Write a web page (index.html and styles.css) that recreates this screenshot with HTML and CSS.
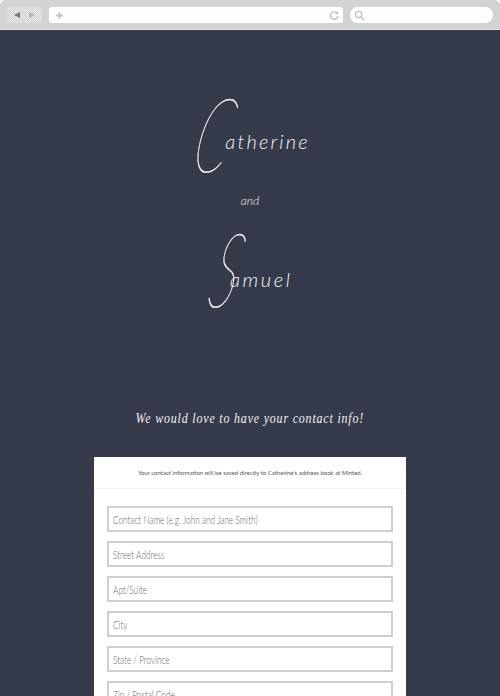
FILE: index.html
```html
<!DOCTYPE html>
<html lang="en">
<head>
<meta charset="utf-8">
<title>Contact info</title>
<link rel="stylesheet" href="styles.css">
</head>
<body>
<div class="window">
  <header class="toolbar">
    <div class="nav">
      <svg class="nav-icon" viewBox="0 0 10 10"><path d="M8 2 2 5l6 3z" fill="#777"/></svg>
      <svg class="nav-icon" viewBox="0 0 10 10"><path d="M2 2l6 3-6 3z" fill="#b4b4b4"/></svg>
    </div>
    <div class="address">
      <svg class="plus" viewBox="0 0 10 10"><path d="M5 1v8M1 5h8" stroke="#c4c4c4" stroke-width="2"/></svg>
      <svg class="reload" viewBox="0 0 10 10"><path d="M8 3.2A3.7 3.7 0 1 0 8.8 6" fill="none" stroke="#bdbdbd" stroke-width="1.4"/><path d="M6.2 3.6 9 4V1z" fill="#bdbdbd"/></svg>
    </div>
    <div class="search">
      <svg class="glass" viewBox="0 0 12 12"><circle cx="5" cy="5" r="3.4" fill="none" stroke="#c0c0c0" stroke-width="1.4"/><path d="M7.6 7.6 11 11" stroke="#c0c0c0" stroke-width="1.6"/></svg>
    </div>
  </header>
  <main class="page">
    <section class="names">
      <h1 class="script-name catherine"><span class="cap">C</span><span class="rest">atherine</span></h1>
      <p class="and">and</p>
      <h1 class="script-name samuel"><span class="cap">S</span><span class="rest">amuel</span></h1>
    </section>
    <h2 class="tagline">We would love to have your contact info!</h2>
    <section class="card">
      <p class="notice">Your contact information will be saved directly to Catherine's address book at Minted.</p>
      <form class="fields">
        <div class="field"><span class="hint">Contact Name (e.g. John and Jane Smith)</span></div>
        <div class="field"><span class="hint">Street Address</span></div>
        <div class="field"><span class="hint">Apt/Suite</span></div>
        <div class="field"><span class="hint">City</span></div>
        <div class="field"><span class="hint">State / Province</span></div>
        <div class="field"><span class="hint">Zip / Postal Code</span></div>
      </form>
    </section>
  </main>
</div>
</body>
</html>
```
FILE: styles.css
```css
* { box-sizing: border-box; }
html, body { margin: 0; height: 100%; }
body { overflow: hidden; background: #fff; }
.window { height: 696px; display: flex; flex-direction: column; overflow: hidden; border-radius: 6px 6px 0 0; background: #d3d3d3; }
.toolbar { flex: 0 0 30px; display: flex; align-items: flex-start; padding: 7px 7px 0 7px; background: #d3d3d3; border-bottom: 1px solid #e4e4e4; }
.nav { width: 35px; height: 16px; margin-right: 7px; display: flex; align-items: center; justify-content: center; gap: 5px; border-radius: 3px; background: repeating-conic-gradient(#d0d0d0 0 25%, #ebebeb 0 50%) 0 0 / 2px 2px; }
.nav-icon { width: 10px; height: 10px; }
.address { width: 294px; height: 16px; margin-right: 7px; display: flex; align-items: center; justify-content: space-between; padding: 0 4px 0 6px; background: #fff; border-radius: 3px; }
.plus { width: 9px; height: 9px; }
.reload { width: 10px; height: 10px; }
.search { width: 143px; height: 16px; display: flex; align-items: center; padding-left: 4px; background: #fff; border-radius: 8px; }
.glass { width: 11px; height: 11px; }
.page { flex: 1; min-height: 0; background: #363b4c; color: #fff; display: flex; flex-direction: column; align-items: center; overflow: hidden; }
.names { flex: 0 0 375px; width: 100%; display: flex; flex-direction: column; align-items: center; padding-top: 60px; }
.script-name { margin: 0; font-family: Lato, sans-serif; font-style: italic; font-weight: 300; color: #f4f4f4; display: flex; align-items: flex-end; }
.catherine { height: 85px; margin-left: 10px; }
.samuel { height: 84px; margin-left: 12px; }
.cap { font-weight: 100; font-size: 103px; line-height: 85px; -webkit-text-stroke: .5px #f4f4f4; transform: skewX(-14deg) scaleX(.52); margin: 0 -17px; }
.rest { font-size: 20px; line-height: 20px; letter-spacing: 2.2px; margin: 0 0 24px -6px; }
.samuel .rest { letter-spacing: 2.6px; margin-bottom: 21px; }
.and { margin: 19px 0 18px; height: 14px; font: italic 300 12px/14px Lato, sans-serif; color: #f0f0f0; }
.tagline { margin: 0; height: 26px; font: italic 400 15px/26px "Liberation Serif", serif; letter-spacing: 1px; color: #f1f1f1; transform: scaleX(.8); white-space: nowrap; }
.card { width: 312px; margin-top: 26px; background: #fff; flex: 1 0 auto; border-bottom: 1px solid #c9c9c9; }
.notice { margin: 0; height: 32px; padding-top: 11px; font: 400 6px/10px Lato, sans-serif; color: #555; text-align: center; border-bottom: 1px solid #f4f4f4; }
.fields { display: flex; flex-direction: column; gap: 9px; padding: 17px 13px 0; }
.field { width: 100%; height: 26px; flex: none; display: flex; align-items: center; padding: 1px 4px 0; border: 2px solid #cfcfcf; background: #fff; }
.hint { font: 300 11px/14px Lato, sans-serif; color: #666; white-space: nowrap; transform: scaleX(.75); transform-origin: left center; }
```
